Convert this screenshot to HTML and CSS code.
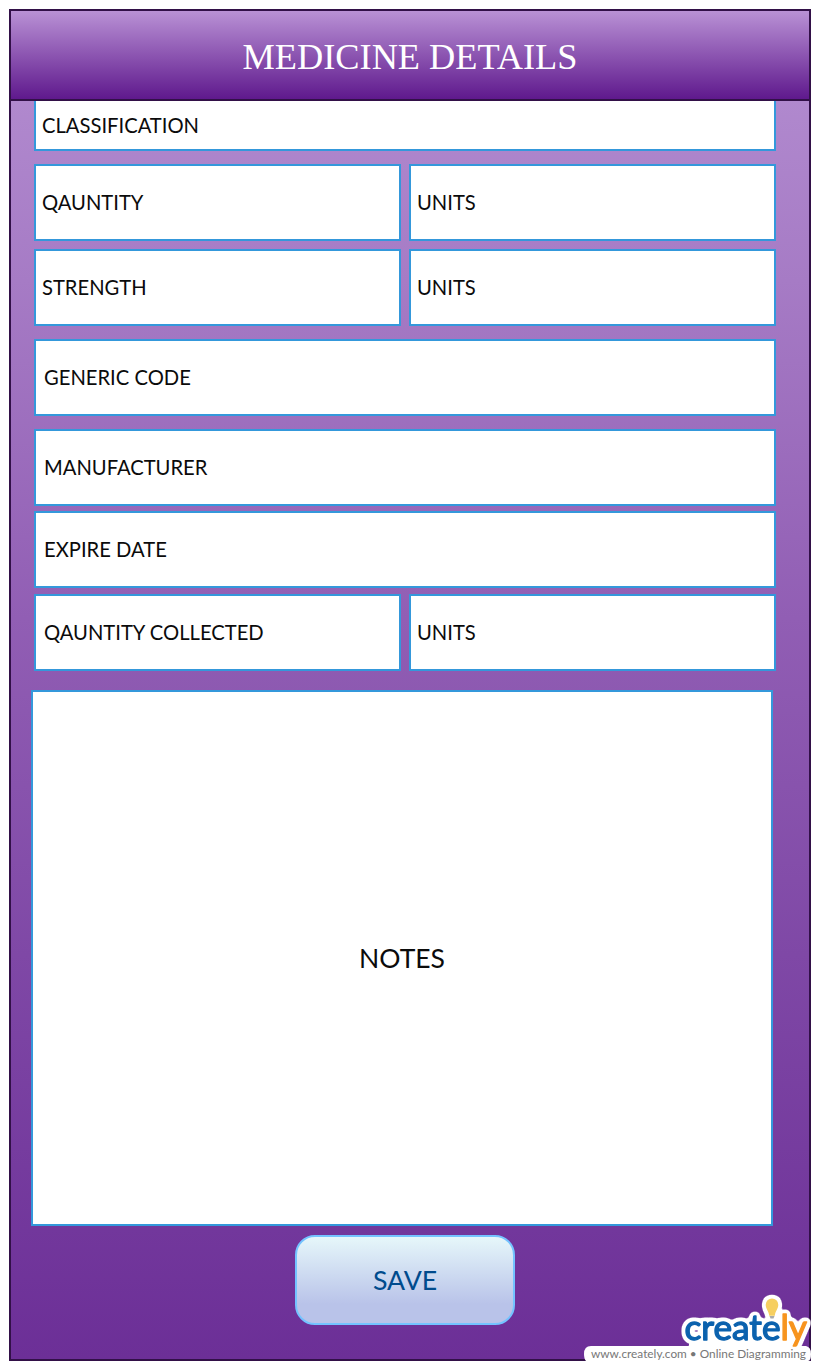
FILE: index.html
```html
<!DOCTYPE html>
<html lang="en">
<head>
<meta charset="utf-8">
<title>Medicine Details</title>
<link rel="stylesheet" href="styles.css">
</head>
<body>
<main class="screen">
  <header class="header"><h1 class="title">MEDICINE DETAILS</h1></header>
  <form class="form">
    <div class="field field-cut"><span class="label">CLASSIFICATION</span></div>
    <div class="row row-quantity">
      <div class="field"><span class="label">QAUNTITY</span></div>
      <div class="field"><span class="label">UNITS</span></div>
    </div>
    <div class="row row-strength">
      <div class="field"><span class="label">STRENGTH</span></div>
      <div class="field"><span class="label">UNITS</span></div>
    </div>
    <div class="field field-code inset"><span class="label">GENERIC CODE</span></div>
    <div class="field field-maker inset"><span class="label">MANUFACTURER</span></div>
    <div class="field field-expiry inset"><span class="label">EXPIRE DATE</span></div>
    <div class="row row-collected">
      <div class="field inset"><span class="label">QAUNTITY COLLECTED</span></div>
      <div class="field"><span class="label">UNITS</span></div>
    </div>
    <div class="notes">NOTES</div>
    <button class="save" type="button">SAVE</button>
  </form>
</main>
<svg class="brand" width="240" height="80" viewBox="580 1290 240 80" role="img" aria-label="creately">
  <defs>
    <filter id="halo" filterUnits="userSpaceOnUse" x="670" y="1290" width="141" height="71" color-interpolation-filters="sRGB">
      <feMorphology in="SourceAlpha" operator="dilate" radius="1" result="wide"/>
      <feGaussianBlur in="wide" stdDeviation="1.900"/>
      <feComponentTransfer result="spread"><feFuncA type="linear" slope="12" intercept="-0.600"/></feComponentTransfer>
      <feFlood flood-color="#fff"/>
      <feComposite in2="spread" operator="in"/>
      <feMerge><feMergeNode/><feMergeNode in="SourceGraphic"/></feMerge>
    </filter>
  </defs>
  <path d="M591 1346H806Q811 1347 811 1354Q811 1361 808 1361H586Q584 1359 584 1354Q584 1346 591 1346Z" fill="#fff"/>
  <path d="M688 1336H800V1350H686Q691 1346 688 1336Z" fill="#fff"/>
  <g filter="url(#halo)">
    <path d="M772 1298.500a6.300 6.300 0 0 0-6.300 6.300c0 4 3 6 3.500 11h5.600c.5-5 3.500-7 3.500-11a6.300 6.300 0 0 0-6.300-6.300z" fill="#f6cf60"/>
    <path d="M769.500 1316h5l-1 2.500h-3z" fill="#aaa"/>
    <text class="wordmark" x="684.500" y="1340" textLength="122.500" lengthAdjust="spacingAndGlyphs"><tspan class="blue">create</tspan><tspan class="orange">ly</tspan></text>
  </g>
  <text class="tagline" x="591" y="1358" textLength="215" lengthAdjust="spacingAndGlyphs">www.creately.com • Online Diagramming</text>
</svg>
</body>
</html>
```
FILE: styles.css
```css
* { box-sizing: border-box; }
body {
  margin: 0;
  padding: 9px;
  width: 820px;
  height: 1370px;
  overflow: hidden;
  background: #fff;
  font-family: Lato, sans-serif;
  color: #0b0b0b;
}
.screen {
  width: 802px;
  height: 1352px;
  border: 2px solid #321048;
  background: linear-gradient(#b58fd2 0%, #a67bc5 20%, #915eb4 45%, #7f48a6 70%, #6c2f97 100%);
}
.header {
  height: 90px;
  border-bottom: 2px solid #321048;
  background: linear-gradient(#b991d5, #5f198d);
  display: flex;
  align-items: center;
  justify-content: center;
}
.title {
  margin: 0;
  padding-top: 4px;
  font: 400 36.300px/44px "Liberation Serif", serif;
  color: #fff;
}
.form {
  padding-left: 23px;
  display: flex;
  flex-direction: column;
  align-items: flex-start;
}
.field {
  width: 742px;
  height: 77px;
  padding-left: 6px;
  border: 2px solid #3498db;
  background: #fff;
  display: flex;
  align-items: center;
  font-size: 20.200px;
  line-height: 24px;
}
.label { padding-bottom: 1px; }
.inset { padding-left: 8px; }
.field-cut { height: 50px; border-top: 0; padding-top: 1px; }
.row {
  display: grid;
  grid-template-columns: 367px 367px;
  gap: 8px;
}
.row .field { width: 367px; }
.row-quantity { margin-top: 13px; }
.row-strength { margin-top: 8px; }
.field-code, .field-maker { margin-top: 13px; }
.field-expiry { margin-top: 5px; }
.row-collected { margin-top: 6px; }
.notes {
  width: 742px;
  height: 536px;
  margin: 19px 0 0 -3px;
  border: 2px solid #3498db;
  background: #fff;
  display: flex;
  align-items: center;
  justify-content: center;
  font-size: 26.500px;
}
.save {
  width: 220px;
  height: 90px;
  margin: 9px 0 0 261px;
  padding: 0;
  border: 2px solid #74c3ff;
  border-radius: 20px;
  background: linear-gradient(#e6f7fa 0%, #b9c3e9 78%, #b9c3e9 100%);
  font: 26.700px Lato, sans-serif;
  color: #004b8d;
}
.brand {
  position: absolute;
  left: 580px;
  top: 1290px;
}
.wordmark { font: 400 34px Lato, sans-serif; stroke-width: 1.300px; stroke-linejoin: round; }
.blue { fill: #0b62ae; stroke: #0b62ae; }
.orange { fill: #f7941e; stroke: #f7941e; }
.tagline { font: 12px Lato, sans-serif; fill: #777; }
```
